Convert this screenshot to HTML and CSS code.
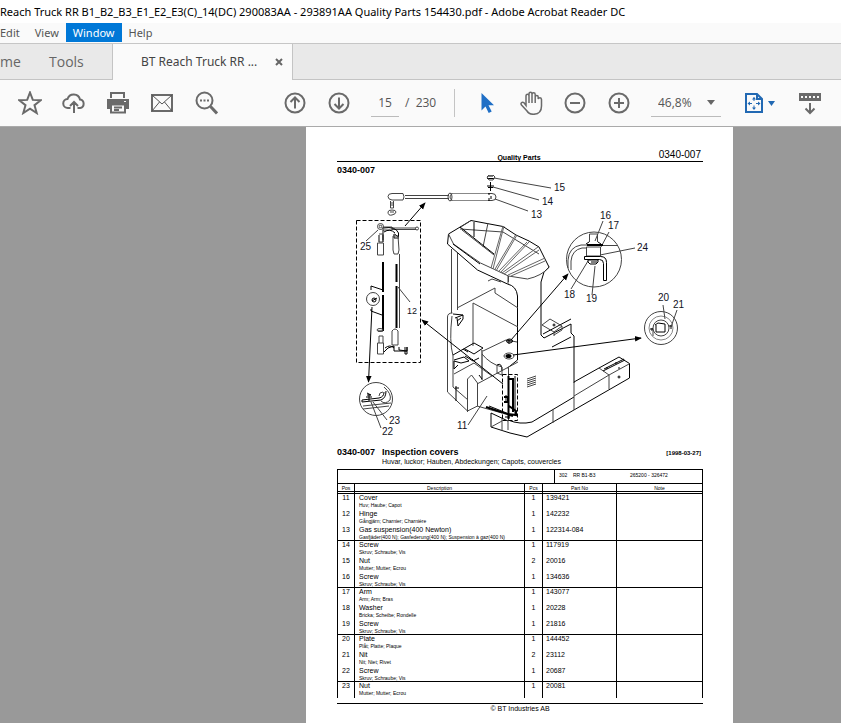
FILE: index.html
```html
<!DOCTYPE html>
<html lang="en">
<head>
<meta charset="utf-8">
<title>Adobe Acrobat Reader DC</title>
<link rel="stylesheet" href="styles.css">
</head>
<body>
<header class="titlebar">Reach Truck RR B1_B2_B3_E1_E2_E3(C)_14(DC) 290083AA - 293891AA Quality Parts 154430.pdf - Adobe Acrobat Reader DC</header>
<nav class="menubar">
  <button class="menu">Edit</button><button class="menu">View</button><button class="menu active">Window</button><button class="menu">Help</button>
</nav>
<div class="tabs">
  <button class="tab home">me</button>
  <button class="tab tools">Tools</button>
  <div class="doc-tab"><span>BT Reach Truck RR ...</span>
    <button class="close" aria-label="Close tab"><svg width="8" height="8" viewBox="0 0 8 8"><path d="M1 1l6 6M7 1l-6 6"/></svg></button>
  </div>
</div>
<div class="toolbar">
  <button class="tool" aria-label="Star"><svg viewBox="0 0 24 24"><path d="M12 1.500l2.800 7.400 8 .3-6.300 5 2.200 7.800-6.700-4.400L5.300 22l2.200-7.800-6.300-5 8-.3z"/></svg></button>
  <button class="tool" aria-label="Upload"><svg viewBox="0 0 24 24"><path d="M8.500 17H6a4.500 4.500 0 0 1-.5-9A6.500 6.500 0 0 1 18 8.500 4.300 4.300 0 0 1 18 17h-2.500M12 22V11.500M8 15l4-4 4 4"/></svg></button>
  <button class="tool" aria-label="Print"><svg viewBox="0 0 24 24"><path class="solid" d="M4 1h15v6H4zM1 8h22v10h-3v-5H4v5H1z"/><path class="paper" d="M6 3h11v4H6z"/><path d="M5 13.500h14v8H5zM8 16.500h8M8 19h5"/><path class="paper" d="M18 10h2v1h-2z"/></svg></button>
  <button class="tool" aria-label="Mail"><svg viewBox="0 0 24 24"><path d="M2 4h20v16H2z"/><path class="thin" d="M2 4l10 9L22 4M2 20l7.500-9M22 20l-7.500-9"/></svg></button>
  <button class="tool" aria-label="Search"><svg viewBox="0 0 24 24"><circle cx="10.500" cy="9.500" r="8"/><path class="heavy" d="M16.500 15.500l6.500 7"/><path class="solid" d="M6 8.500h2v2H6zM9.500 8.500h2v2h-2zM13 8.500h2v2h-2z"/></svg></button>
  <button class="tool nav-first" aria-label="Previous page"><svg viewBox="0 0 24 24"><circle cx="12" cy="12" r="9.500"/><path d="M12 17.500V7M7.500 11L12 6.500l4.500 4.500"/></svg></button>
  <button class="tool" aria-label="Next page"><svg viewBox="0 0 24 24"><circle cx="12" cy="12" r="9.500"/><path d="M12 6.500V17M7.500 13l4.500 4.500 4.500-4.500"/></svg></button>
  <input class="page-no" aria-label="Page number" value="15">
  <span class="page-count">/&nbsp; 230</span>
  <span class="separator"></span>
  <button class="tool" aria-label="Select"><svg viewBox="0 0 24 24"><path class="blue-fill" d="M6.500 2v17.500l4-4 3.200 6.500 3-1.500-3.200-6.200H19z"/></svg></button>
  <button class="tool" aria-label="Hand"><svg viewBox="0 0 24 24"><path class="hand" d="M7 14.500V5q0-1.700 1.500-1.700T10 5v7V3q0-1.700 1.500-1.700T13 3v9V3.500q0-1.700 1.600-1.700t1.600 1.700V12 6q0-1.600 1.500-1.600t1.500 1.600V8q.4-1.200 1.700-1.200T22.500 8.500V15q0 8-8 8.300-4.500 0-6.500-3.300L2.500 14q-1-1.300 0-2.300t2.500 0z"/></svg></button>
  <button class="tool" aria-label="Zoom out"><svg viewBox="0 0 24 24"><circle cx="12" cy="12" r="9.500"/><path d="M7 12h10"/></svg></button>
  <button class="tool" aria-label="Zoom in"><svg viewBox="0 0 24 24"><circle cx="12" cy="12" r="9.500"/><path d="M7 12h10M12 7v10"/></svg></button>
  <div class="zoom"><select aria-label="Zoom level"><option>46,8%</option></select><svg width="8" height="5" viewBox="0 0 8 5"><path d="M0 0h8L4 5z"/></svg></div>
  <button class="fit" aria-label="Fit page"><svg class="fit-icon" width="20" height="22" viewBox="0 0 20 22"><path d="M2 2h11l5 5v13H2zM13 2v5h5"/><path class="fit-arrows" d="M10 5.500V9M10 13.500V17M4 11.500h4M12 11.500h4"/><path class="fit-heads" d="M10 5l2 2.500H8zM10 18l2-2.500H8zM3.500 11.500L6 9.500v4zM16.500 11.500l-2.500-2v4z"/></svg><svg class="caret" width="7" height="5" viewBox="0 0 7 5"><path d="M0 0h7L3.500 5z"/></svg></button>
  <button class="tool scroll" aria-label="Scrolling mode"><svg viewBox="0 0 24 24"><path class="solid" d="M1 2h22v8H1z"/><path class="dots" d="M3 6h18"/><path d="M12 12v10M7.500 17.500L12 22l4.500-4.500"/></svg></button>
</div>
<main class="viewer">
  <article class="sheet">
    <div class="running-head"><b>Quality Parts</b><span>0340-007</span></div>
    <h2 class="code">0340-007</h2>
    <svg class="drawing" viewBox="337 175 366 265" role="img" aria-label="Inspection covers, exploded view">
      <defs><marker id="arrow" viewBox="0 0 8 8" refX="7" refY="4" markerWidth="7" markerHeight="7" markerUnits="userSpaceOnUse" orient="auto"><path d="M0 .8L8 4 0 7.200z" fill="#000" stroke="none"/></marker></defs>
      <!-- gas spring -->
      <g class="fine">
        <path d="M403 193.500h-11q-4 0-4 3t4 3.500h11q2-3 0-6.500zM405 195.500h44M405 198.500h44"/>
        <path class="pale" d="M450 193.500h38M450 200.500h38"/><path d="M452 193.500q-4 3.500 0 7"/><ellipse cx="450" cy="197" rx="2" ry="4"/>
        <path d="M488 193.500h4q4 0 4 3.500t-4 3.500h-4"/><path class="bold" d="M489 193v2M489 198v3M491 196v3" />
        <path d="M390.500 201v7h3v-7M390.500 203h3M390.500 205h3M388 212q0-2 4-2t4 2-4 3-4-3zM390 212h4"/>
        <path class="bold" d="M488 176h5M487 178.500h7M488 187.500h5M490.500 182v9M487 186h7"/>
        <path d="M487 177l2-2h4l2 2-2 3h-4zM494 178l57 10M493 187l46 13M495 199l33 12"/>
      </g>
      <!-- hinge assembly -->
      <path class="dash" d="M356.500 220.500h64v142h-64z"/>
      <g class="fine">
        <circle cx="380.500" cy="226.500" r="3"/><circle cx="380.500" cy="226.500" r="1.300"/>
        <path d="M366 241l12-11M383 227h9v3h-9zM392 228h24M392 229.500h24"/><circle cx="417" cy="228.500" r="1.500"/>
        <path class="hard" d="M383 262v30M383 295v36M396.500 264v18M396.500 286v42"/>
        <path class="bold" d="M379 235v7M383 235v7M383.500 228q12-2 15 5v4l-4-3M384 232q6-4 11 1M383 230v10M394 234v4h5"/>
        <path d="M377.500 243h6v12h-6zM379 234h4v8h-4M393 236h5l1 14-1 4h-4l-1-4zM399.500 254v74M398 287l12 15"/>
        <path class="bold" d="M371 290v-4l12 4M371 309v2l11 4M378 331h5"/>
        <circle cx="373" cy="299" r="6.500"/><circle class="bold" cx="374" cy="300" r="2"/><path class="bold" d="M372 301l5-3"/>
        <ellipse cx="380" cy="330" rx="3" ry="1.500"/><path d="M377.500 343h6v11h-6zM379 343v-7h4v7M392 331q3-4 6 0v14h-6z"/>
        <path class="bold" d="M384 352q3-5 10-6v5h13v-4M385 348q5-4 9 0M399 347v3l8 1M405 347v7h2v-7"/>
      </g>
      <path class="lead" d="M372 307l-3.500 75"/><path class="lead" d="M405 226l20-23"/>
      <g class="fine"><circle cx="376" cy="399" r="16.500"/>
        <path class="bold" d="M362 400l17-2q5-1 5-6M362 402l19-2q5-2 5-9M362 400v2M367 393l4 2M366 397h6M369 394v7M367 395h4"/><path d="M363 406l28-3M363 409l26-3M384 387q8 7 6 13-5 5-9 1M383 392q-4 0-4 4M371 402l10 26M373 402l14 18"/></g>
      <!-- overhead guard -->
      <g class="fine">
        <path class="solid-line" d="M448.500 234l22.500-13.500 32 6 13 8.500 13 6 10 6 10 20-5 5-3 10v53l3 3 27-14v9l3 3v47M448.500 234l-1 10 30 26 30 14q9 2 10 12v64l-10 8"/>
        <path d="M448.500 234l5 10 27 19 13 6 15 7 19 3q14-3 22-12M462 230l32 25M508 276v8M471 220.500l-11 7M460 229l43 3 36 22M488 223l-5 24"/>
        <path class="bold" d="M453 244l27 20M460 227l34 27M474 222v15"/>
        <g class="slats"><path d="M503 226l-12 42M504 226l-11 43M515.500 235l-21 35M517 235l-21 36M527 242l-29 30M529 242l-29 31M538 247l-36 26M539 250l-35 24M545 258l-37 17M545 261l-34 15"/></g>
        <path d="M451.500 249v64M457.500 253v57M447.500 317v75l20 19 10-5v-23l-6-8-4 4v33M447.500 317q0-4 5-4M452 316q-3 25 1 40v31l15 13M457 308l38-20v5l23 15M473 303v43M473 303l45 24M488 281l4-2 9 3"/>
        <path class="bold" d="M453 314l10 1v4l-5 7-1-8M455 318l8-3M457 321l4-3"/>
        <path class="bold" d="M453 355l21-12 9 5-9 6-9-5M463 349l5 3M454 360l10-3 5 4-8 2-7-2v8l4-4M465 356l8 5 6-3M482 350v30M479 375l3 4M497 365q5-3 5 6M455 388h4M456 386v15M472 359l4 4"/>
        <path d="M483 351l23-11 11 2M454 374l20-11 18 13M477 384l41-22M477 406l25 7M482 354q8 10 20 13v8M497 365v8l5 2"/>
      </g>
      <!-- chassis and forks -->
      <g class="fine">
        <path class="solid-line" d="M508 420q12 5 24 2l42-25M574 382l25-14 20-11 10.500 6.500V378L527 437l-17-4-19-6v-14M491 413l17 8"/>
        <path d="M574 396l35-21 20-11M609 375v14M599 368l10 7M553 409v14M574 382v28M502 418v13M508 421v9M491 427l11-6M508.500 276v6M508.500 368v52"/>
        <path class="bold" d="M603 371l22-11M604 369l20-10M606 368h2M615 363h2M618 368h2M552 347l19-10M543 334l28-15"/>
        <path d="M542 325l8-6 12 7v4l-8 5M542 325l12 7 8-6M554 332v4"/><circle class="bold" cx="554" cy="325" r="1"/><circle class="bold" cx="619" cy="377" r="1"/>
        <path class="dash" d="M502.500 374.500h15v46h-15z"/>
        <path class="hard" d="M508.500 376v43M513 378v34M509 379h5M504 397h4v5h-4M509 406l7 5v4l-8-1M486 407l27 9"/>
        <path class="bold" d="M489 406l20 8M506 395v8M515 376v38M505 417h5"/>
        <path d="M527 379l9-3M527 381l9-3M527 383l9-3M527 385l9-3M527 387l9-3M487 396l-19 29"/>
        <ellipse class="bold" cx="509.500" cy="341" rx="3" ry="2"/><path class="bold" d="M507 341h6M509 339v5"/><ellipse cx="509" cy="356" rx="5" ry="3"/><ellipse class="hard" cx="508.500" cy="356" rx="2" ry="1"/>
      </g>
      <path class="lead" d="M503 384l-81-64"/><path class="lead" d="M511 340l57-66"/><path class="lead" d="M513 355l128-17"/>
      <!-- enlarged details -->
      <g class="fine">
        <circle cx="594" cy="259.500" r="27.500"/><path d="M589.500 242v-8h8v8M586.500 247h14v9h-14zM568 268v-8q1-13 13-15h7M571 270v-9q1-11 11-13h5M601 245.500h17M603 221l-8 20M609 232l-8 15M635 248l-35 7M571 289l17-28M592 295l3-29"/>
        <path class="hard" d="M587 245h16"/><path class="bold" d="M589 242l-3 2M598 242l3 2M584.500 256.500h16q6 0 6 6v18h-3v-17q0-4-4-4h-15zM588 260h10v2l-2 2h-6l-2-2zM591 262h6"/>
        <circle cx="661" cy="328" r="16.500"/><circle class="pale" cx="661" cy="328" r="12"/><circle cx="661" cy="328" r="8"/><path class="bold" d="M655 325l3-2 7 1v8h-9v-7M650 329h3M652 328v3M669 326h3M671 325v4"/><path d="M665 319l-2-14M671 327l6-17M653 331v5"/>
      </g>
      <g class="labels">
        <text x="554" y="191">15</text><text x="542" y="205">14</text><text x="531" y="218">13</text><text x="600" y="219">16</text><text x="608" y="229">17</text><text x="637" y="251">24</text><text x="564" y="298">18</text><text x="586" y="302">19</text><text x="658" y="301">20</text><text x="673" y="308">21</text><text x="360" y="250">25</text><text x="407" y="314" class="small">12</text><text x="389" y="424">23</text><text x="382" y="435">22</text><text x="457" y="429">11</text>
      </g>
    </svg>
    <div class="section">
      <h2 class="code">0340-007</h2><h2>Inspection covers</h2><span class="date">[1998-03-27]</span>
      <p>Huvar, luckor; Hauben, Abdeckungen; Capots, couvercles</p>
    </div>
    <div class="model"><span>302 &nbsp;&nbsp; RR B1-B3</span><span>265200 - 326472</span></div>
    <table>
      <colgroup><col class="c-pos"><col><col class="c-pcs"><col class="c-part"><col class="c-note"></colgroup>
      <thead><tr><th>Pos</th><th>Description</th><th>Pcs</th><th>Part No</th><th>Note</th></tr></thead>
      <tbody>
        <tr><td>11</td><td>Cover<small>Huv; Haube; Capot</small></td><td>1</td><td>139421</td><td></td></tr>
        <tr><td>12</td><td>Hinge<small>Gångjärn; Charnier; Charnière</small></td><td>1</td><td>142232</td><td></td></tr>
        <tr><td>13</td><td>Gas suspension(400 Newton)<small>Gasfjäder(400 N); Gasfederung(400 N); Suspension à gaz(400 N)</small></td><td>1</td><td>122314-084</td><td></td></tr>
      </tbody><tbody>
        <tr><td>14</td><td>Screw<small>Skruv; Schraube; Vis</small></td><td>1</td><td>117919</td><td></td></tr>
        <tr><td>15</td><td>Nut<small>Mutter; Mutter; Ecrou</small></td><td>2</td><td>20016</td><td></td></tr>
        <tr><td>16</td><td>Screw<small>Skruv; Schraube; Vis</small></td><td>1</td><td>134636</td><td></td></tr>
      </tbody><tbody>
        <tr><td>17</td><td>Arm<small>Arm; Arm; Bras</small></td><td>1</td><td>143077</td><td></td></tr>
        <tr><td>18</td><td>Washer<small>Bricka; Scheibe; Rondelle</small></td><td>1</td><td>20228</td><td></td></tr>
        <tr><td>19</td><td>Screw<small>Skruv; Schraube; Vis</small></td><td>1</td><td>21816</td><td></td></tr>
      </tbody><tbody>
        <tr><td>20</td><td>Plate<small>Plåt; Platte; Plaque</small></td><td>1</td><td>144452</td><td></td></tr>
        <tr><td>21</td><td>Nit<small>Nit; Niet; Rivet</small></td><td>2</td><td>23112</td><td></td></tr>
        <tr><td>22</td><td>Screw<small>Skruv; Schraube; Vis</small></td><td>1</td><td>20687</td><td></td></tr>
      </tbody><tbody>
        <tr><td>23</td><td>Nut<small>Mutter; Mutter; Ecrou</small></td><td>1</td><td>20081</td><td></td></tr>
      </tbody>
    </table>
    <footer>© BT Industries AB</footer>
  </article>
</main>
</body>
</html>
```
FILE: styles.css
```css
* { box-sizing: border-box; }
body {
  margin: 0;
  min-height: 100vh;
  display: flex;
  flex-direction: column;
  overflow: hidden;
  background: #fff;
  color: #555;
  font: 12px/16px "Open Sans", "Noto Sans", sans-serif;
}
button, input, select { font: inherit; color: inherit; border: 0; background: none; padding: 0; margin: 0; }
h2, p { margin: 0; }
svg { display: block; }

.titlebar { height: 23px; padding-top: 4px; color: #000; font-family: "Noto Sans", sans-serif; font-size: 11px; white-space: nowrap; }
.menubar { display: flex; height: 21px; background: #fafafa; border-bottom: 1px solid #c6c6c6; font-family: "Noto Sans", sans-serif; font-size: 11px; }
.menu { height: 19px; padding: 0 7px; color: #555; }
.menu:first-child { padding-left: 0; padding-right: 8px; }
.menu.active { background: #0078d7; color: #fff; }

.tabs { display: flex; height: 36px; background: #e9e9e9; border-bottom: 1px solid #c4c4c4; }
.tab { font-size: 14px; text-align: left; color: #666; }
.home { width: 49px; }
.tools { width: 63px; }
.doc-tab {
  display: flex; align-items: center; justify-content: space-between;
  width: 181px; height: 36px; padding: 0 9px 0 28px;
  background: #fafafa; border: solid #c4c4c4; border-width: 0 1px;
  color: #444; font-family: "Noto Sans", sans-serif; white-space: nowrap;
}
.close svg { stroke: #666; stroke-width: 2; }

.toolbar { display: flex; align-items: center; height: 47px; padding-left: 8px; background: #fafafa; border-bottom: 1px solid #aaa; }
.tool { width: 44px; height: 44px; display: grid; place-items: center; flex: none; }
.tool svg { width: 24px; height: 24px; fill: none; stroke: #6a6a6a; stroke-width: 2; }
.tool .thin { stroke-width: 1; stroke: #555; }
.tool .hand { stroke-width: 1.5; }
.tool .heavy { stroke-width: 3; }
.tool .solid { fill: #6a6a6a; stroke: none; }
.tool .paper { fill: #fafafa; stroke: none; }
.tool .dots { stroke: #fafafa; stroke-dasharray: 2 2; }
.tool .blue-fill { fill: #1f6fc6; stroke: none; }
.nav-first { margin-left: 45px; }
.page-no { width: 28px; height: 28px; margin-left: 10px; border-bottom: 1px solid #bbb; text-align: center; }
.page-count { width: 49px; padding-left: 6px; white-space: nowrap; }
.separator { width: 1px; height: 28px; margin: 0 10px 0 6px; background: #c4c4c4; }
.zoom { display: flex; align-items: center; width: 70px; height: 28px; margin-left: 10px; border-bottom: 1px solid #bbb; }
.zoom select { appearance: none; width: 56px; padding-left: 7px; }
.zoom svg { fill: #666; }
.fit { display: flex; align-items: center; gap: 4px; margin-left: 23px; }
.fit-icon { fill: none; stroke: #2269b3; stroke-width: 2; }
.fit-arrows { stroke-width: 1; }
.fit-heads { fill: #2269b3; stroke: none; }
.caret { fill: #2269b3; }
.scroll { margin-left: 13px; }

.viewer { flex: 1; display: grid; grid-template-columns: 306fr 427px 108fr; background: #999; }
.sheet { grid-column: 2; padding: 20px 30px 4px 31px; background: #fff; color: #000; font: 7px/8px "Liberation Sans", Arial, sans-serif; }
.running-head { display: grid; grid-template-columns: 1fr auto 1fr; align-items: end; height: 15px; padding-right: 2px; border-bottom: 1px solid #000; }
.running-head b { grid-column: 2; }
.running-head span { justify-self: end; font-size: 10px; line-height: 15px; }
.sheet h2 { font-size: 9px; line-height: 11px; }
.sheet > .code { padding-top: 3px; height: 13px; }
.drawing { width: 100%; height: auto; fill: none; stroke: #000; stroke-width: 1; }
.fine { stroke: #444; stroke-width: 1; }
.fine .pale { stroke: #888; }
.slats { stroke: #666; }
.fine .bold, .fine .solid-line { stroke: #000; }
.fine .hard { stroke: #000; stroke-width: 2; }
.drawing .dash { stroke: #000; stroke-dasharray: 4 2; }
.lead { marker-end: url(#arrow); }
.labels { fill: #112; stroke: none; font-size: 10px; }
.labels .small { font-size: 9px; }

.section { display: grid; grid-template-columns: 45px 1fr auto; align-items: center; padding-top: 7px; }
.section .date { font-size: 6px; font-weight: bold; padding-right: 2px; }
.section p { grid-column: 2 / 4; }
.model { display: grid; grid-template-columns: 76px 72px; justify-content: end; height: 14px; margin-top: 3px; border: 1px solid #000; border-bottom: 0; font-size: 5px; line-height: 11px; }
.model span:first-child { border-left: 1px solid #000; padding-left: 4px; }
table { width: 100%; table-layout: fixed; border-collapse: separate; border-spacing: 0; }
.c-pos { width: 18px; }
.c-pcs { width: 18px; }
.c-part { width: 74px; }
.c-note { width: 86px; }
th { height: 11px; padding: 1px 0 0; border: 0 solid #000; border-top-width: 1px; border-bottom: 3px double #000; border-right-width: 1px; font-size: 5px; line-height: 6px; font-weight: normal; vertical-align: middle; }
th:first-child, td:first-child { border-left: 1px solid #000; }
td { height: 16px; padding: 0 0 0 3px; border-right: 1px solid #000; vertical-align: top; line-height: 8px; }
td:nth-child(2) { padding-left: 4px; }
td:first-child, td:nth-child(3) { padding: 0; text-align: center; }
tr:nth-child(3) td { height: 15px; border-bottom: 1px solid #000; }
small { display: block; font-size: 5px; line-height: 6px; white-space: nowrap; }
footer { margin-top: 5px; padding-top: 1px; border-top: 1px solid #000; text-align: center; }
```
